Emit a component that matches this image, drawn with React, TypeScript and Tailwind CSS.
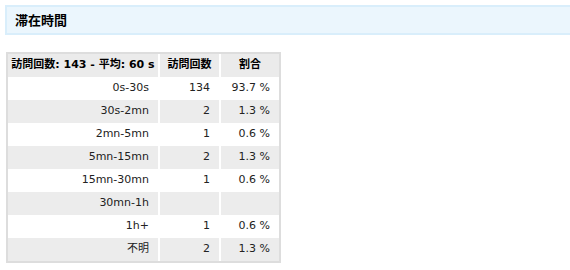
const rows: [string, string, string][] = [
    ['0s-30s', '134', '93.7 %'],
    ['30s-2mn', '2', '1.3 %'],
    ['2mn-5mn', '1', '0.6 %'],
    ['5mn-15mn', '2', '1.3 %'],
    ['15mn-30mn', '1', '0.6 %'],
    ['30mn-1h', '', ''],
    ['1h+', '1', '0.6 %'],
    ['不明', '2', '1.3 %'],
]

export default function App() {
    return (
        <div className="w-[570px] h-[270px] overflow-hidden bg-white pt-[5px] pl-[5px] font-['DejaVu_Sans','Noto_Sans_CJK_JP',sans-serif] text-[11px] text-[#222]">
            <div className="h-[30px] w-[580px] border-2 border-[#d9eefb] bg-[#ebf6fd] flex items-center pl-[8px]">
                <h2 className="text-[13px] font-bold text-black leading-none">滞在時間</h2>
            </div>
            <table className="mt-[17px] ml-[1px] border-2 border-[#dddddd] border-separate border-spacing-0 bg-white">
                <thead>
                    <tr className="bg-[#ebebeb] h-[23px] font-bold text-black">
                        <th className="w-[152px] border-r-2 border-white text-center font-bold p-0">訪問回数: 143 - 平均: 60 s</th>
                        <th className="w-[61px] border-r-2 border-white text-center font-bold p-0">訪問回数</th>
                        <th className="w-[58px] text-center font-bold p-0">割合</th>
                    </tr>
                </thead>
                <tbody>
                    {rows.map((r, i) => (
                        <tr key={i} className={`h-[23px] ${i % 2 === 1 ? 'bg-[#ececec]' : 'bg-white'}`}>
                            <td className="border-r-2 border-white text-right pr-[9px] p-0">{r[0]}</td>
                            <td className="border-r-2 border-white text-right pr-[9px] p-0">{r[1]}</td>
                            <td className="text-right pr-[9px] p-0">{r[2]}</td>
                        </tr>
                    ))}
                </tbody>
            </table>
        </div>
    )
}
